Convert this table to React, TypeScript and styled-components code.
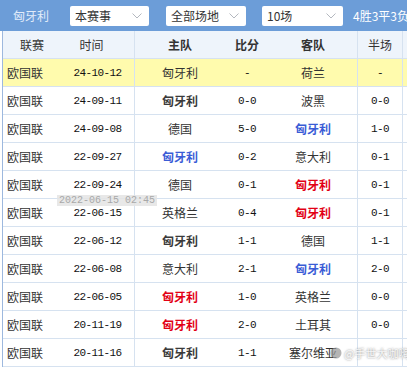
import React from 'react';
import styled, { createGlobalStyle } from 'styled-components';

const GlobalStyle = createGlobalStyle`
  html, body {
    margin: 0;
    padding: 0;
    background: #fff;
    overflow: hidden;
  }
  body {
    font-family: "Noto Sans CJK SC", "Noto Sans", sans-serif;
    font-size: 12px;
    color: #333;
  }
`

const Wrapper = styled.div`
  position: relative;
  width: 430px;
`

const TopBar = styled.div`
  display: flex;
  align-items: center;
  height: 31px;
  padding-left: 13px;
  background-color: rgb(108, 157, 216);
  white-space: nowrap;
`

const TeamLabel = styled.div`
  width: 36px;
  margin-right: 21px;
  font-size: 12px;
  color: rgb(226, 236, 250);
`

const Select = styled.div<{ $w: number; $gap: number }>`
  display: flex;
  align-items: center;
  justify-content: space-between;
  box-sizing: border-box;
  width: ${p => p.$w}px;
  height: 20px;
  margin-right: ${p => p.$gap}px;
  padding: 0 7px 0 5px;
  border-radius: 2px;
  background-color: #fff;
  color: #333;
  font-size: 12px;
  line-height: 20px;
`

const Record = styled.div`
  font-size: 12px;
  color: #fff;
`

const Table = styled.div`
  margin-left: 2px;
  border-left: 1px solid rgb(157, 184, 222);
`

const Row = styled.div<{ $bg?: string }>`
  display: grid;
  grid-template-columns: 58px 74px 90px 44px 89px 45px 40px;
  height: 28px;
  box-sizing: border-box;
  border-bottom: 1px solid rgb(214, 226, 240);
  background-color: ${p => p.$bg || '#fff'};
`

const Cell = styled.div<{ $line?: boolean; $left?: boolean; $bold?: boolean; $shift?: number }>`
  display: flex;
  align-items: center;
  justify-content: ${p => (p.$left ? 'flex-start' : 'center')};
  padding-left: ${p => (p.$left ? 4 : 0)}px;
  padding-right: ${p => p.$shift || 0}px;
  border-right: ${p => (p.$line ? '1px solid rgb(214, 226, 240)' : 'none')};
  font-weight: ${p => (p.$bold ? 700 : 400)};
  white-space: nowrap;
  overflow: hidden;
`

const Num = styled.span`
  font-family: "Liberation Mono", "DejaVu Sans Mono", monospace;
  font-size: 11px;
  letter-spacing: -0.6px;
  color: #111;
`

const Team = styled.span<{ $tone: 'plain' | 'dark' | 'blue' | 'red' }>`
  font-size: 12px;
  font-weight: ${p => (p.$tone === 'plain' ? 400 : 700)};
  color: ${p =>
    p.$tone === 'blue' ? 'rgb(58, 92, 214)' : p.$tone === 'red' ? 'rgb(226, 0, 20)' : p.$tone === 'dark' ? '#3a3a3a' : '#333'};
`

const Tooltip = styled.div`
  position: absolute;
  left: 57px;
  top: 195px;
  padding: 0 2px;
  height: 11px;
  line-height: 11px;
  background-color: rgba(228, 228, 228, 0.85);
  color: #a8a8a8;
  font-family: "Liberation Mono", monospace;
  font-size: 10px;
  white-space: nowrap;
`

const Watermark = styled.div`
  position: absolute;
  left: 330px;
  top: 345px;
  display: flex;
  align-items: center;
  gap: 2px;
  color: rgba(255, 255, 255, 0.9);
  text-shadow: 0 0 2px rgba(90, 90, 90, 0.8);
  font-size: 11px;
  white-space: nowrap;
`

const Chevron = () => (
  <svg width="10" height="6" viewBox="0 0 10 6">
    <polyline points="0.5,0.5 5,5 9.5,0.5" fill="none" stroke="#b4b8bf" strokeWidth="1" />
  </svg>
)

type Tone = 'plain' | 'dark' | 'blue' | 'red'

interface Match {
  date: string
  home: string
  homeTone: Tone
  score: string
  away: string
  awayTone: Tone
  half: string
}

const matches: Match[] = [
  { date: '24-10-12', home: '匈牙利', homeTone: 'plain', score: '-', away: '荷兰', awayTone: 'plain', half: '-' },
  { date: '24-09-11', home: '匈牙利', homeTone: 'dark', score: '0-0', away: '波黑', awayTone: 'plain', half: '0-0' },
  { date: '24-09-08', home: '德国', homeTone: 'plain', score: '5-0', away: '匈牙利', awayTone: 'blue', half: '1-0' },
  { date: '22-09-27', home: '匈牙利', homeTone: 'blue', score: '0-2', away: '意大利', awayTone: 'plain', half: '0-1' },
  { date: '22-09-24', home: '德国', homeTone: 'plain', score: '0-1', away: '匈牙利', awayTone: 'red', half: '0-1' },
  { date: '22-06-15', home: '英格兰', homeTone: 'plain', score: '0-4', away: '匈牙利', awayTone: 'red', half: '0-1' },
  { date: '22-06-12', home: '匈牙利', homeTone: 'dark', score: '1-1', away: '德国', awayTone: 'plain', half: '1-1' },
  { date: '22-06-08', home: '意大利', homeTone: 'plain', score: '2-1', away: '匈牙利', awayTone: 'blue', half: '2-0' },
  { date: '22-06-05', home: '匈牙利', homeTone: 'red', score: '1-0', away: '英格兰', awayTone: 'plain', half: '0-0' },
  { date: '20-11-19', home: '匈牙利', homeTone: 'red', score: '2-0', away: '土耳其', awayTone: 'plain', half: '0-0' },
  { date: '20-11-16', home: '匈牙利', homeTone: 'dark', score: '1-1', away: '塞尔维亚', awayTone: 'plain', half: '' },
]

const App: React.FC = () => {
  return (
    <Wrapper>
      <GlobalStyle />
      <TopBar>
        <TeamLabel>匈牙利</TeamLabel>
        <Select $w={79} $gap={17}>本赛事<Chevron /></Select>
        <Select $w={80} $gap={16}>全部场地<Chevron /></Select>
        <Select $w={81} $gap={10}>10场<Chevron /></Select>
        <Record>4胜3平3负</Record>
      </TopBar>

      <Table>
        <Row $bg="rgb(238, 244, 251)">
          <Cell>联赛</Cell>
          <Cell $line $shift={12}>时间</Cell>
          <Cell $bold>主队</Cell>
          <Cell $bold>比分</Cell>
          <Cell $bold $line>客队</Cell>
          <Cell $line>半场</Cell>
          <Cell />
        </Row>
        {matches.map((m, i) => (
          <Row key={m.date} $bg={i === 0 ? 'rgb(255, 251, 173)' : undefined}>
            <Cell $left>欧国联</Cell>
            <Cell $line><Num>{m.date}</Num></Cell>
            <Cell><Team $tone={m.homeTone}>{m.home}</Team></Cell>
            <Cell><Num>{m.score}</Num></Cell>
            <Cell $line><Team $tone={m.awayTone}>{m.away}</Team></Cell>
            <Cell $line><Num>{m.half}</Num></Cell>
            <Cell />
          </Row>
        ))}
      </Table>

      <Tooltip>2022-06-15 02:45</Tooltip>
      <Watermark>
        <svg width="12" height="12" viewBox="0 0 12 12">
          <circle cx="6" cy="6" r="5.5" fill="rgba(150,150,150,0.7)" />
        </svg>
        @手世大咖嗨
      </Watermark>
    </Wrapper>
  )
}

export default App;
